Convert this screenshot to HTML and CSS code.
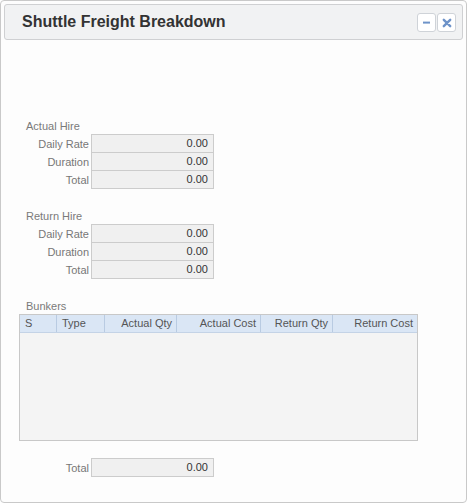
FILE: index.html
```html
<!DOCTYPE html>
<html>
<head>
<meta charset="utf-8">
<link rel="stylesheet" href="styles.css">
</head>
<body>
<div class="window">
  <div class="header">
    <div class="title">Shuttle Freight Breakdown</div>
    <div class="tools">
      <div class="tool"><svg width="9" height="9" viewBox="0 0 9 9"><rect x="1" y="3.6" width="7" height="2" fill="#6e93c9"/></svg></div>
      <div class="tool"><svg width="10" height="10" viewBox="0 0 10 10"><path d="M1.8 1.8 L8.2 8.2 M8.2 1.8 L1.8 8.2" stroke="#6e93c9" stroke-width="2.4" stroke-linecap="round"/></svg></div>
    </div>
  </div>
  <div class="content">
    <div class="section first">
      <div class="sec-title">Actual Hire</div>
      <div class="row"><div class="lbl">Daily Rate</div><div class="box">0.00</div></div>
      <div class="row"><div class="lbl">Duration</div><div class="box">0.00</div></div>
      <div class="row"><div class="lbl">Total</div><div class="box">0.00</div></div>
    </div>
    <div class="section">
      <div class="sec-title">Return Hire</div>
      <div class="row"><div class="lbl">Daily Rate</div><div class="box">0.00</div></div>
      <div class="row"><div class="lbl">Duration</div><div class="box">0.00</div></div>
      <div class="row"><div class="lbl">Total</div><div class="box">0.00</div></div>
    </div>
    <div class="section">
      <div class="sec-title">Bunkers</div>
      <div class="grid">
        <div class="grid-head">
          <div class="col c1">S</div>
          <div class="col c2">Type</div>
          <div class="col c3 r">Actual Qty</div>
          <div class="col c4 r">Actual Cost</div>
          <div class="col c5 r">Return Qty</div>
          <div class="col c6 r">Return Cost</div>
        </div>
        <div class="grid-body"></div>
      </div>
    </div>
    <div class="total-row row"><div class="lbl">Total</div><div class="box">0.00</div></div>
  </div>
</div>
</body>
</html>
```
FILE: styles.css
```css
html, body {
  margin: 0;
  padding: 0;
  background: #ffffff;
}
body {
  font-family: "Liberation Sans", Arial, sans-serif;
  font-size: 11px;
}
.window {
  box-sizing: border-box;
  width: 467px;
  height: 503px;
  border: 1px solid #c9c9c9;
  border-radius: 4px;
  padding: 3px;
  background: #fdfdfd;
}
.header {
  box-sizing: border-box;
  height: 36px;
  border: 1px solid #cfd0d2;
  border-radius: 3px;
  background: #f1f2f3;
  display: flex;
  align-items: center;
  justify-content: space-between;
  padding: 0 6px 0 17px;
}
.title {
  font-size: 16px;
  font-weight: bold;
  color: #333333;
  margin-top: -1px;
}
.tools {
  display: flex;
  gap: 1px;
  margin-top: 1px;
}
.tool {
  box-sizing: border-box;
  width: 19px;
  height: 19px;
  background: #ffffff;
  border: 1px solid #cfd3d8;
  border-radius: 3px;
  display: flex;
  align-items: center;
  justify-content: center;
}
.content {
  padding-left: 15px;
}
.section {
  margin-top: 21px;
}
.section.first {
  margin-top: 79px;
}
.sec-title {
  height: 15px;
  line-height: 14px;
  padding-left: 7px;
  color: #7a7a7a;
}
.row {
  display: flex;
  align-items: center;
  margin-bottom: -1px;
}
.lbl {
  width: 70px;
  text-align: right;
  color: #777777;
  padding-right: 2px;
}
.box {
  box-sizing: border-box;
  width: 123px;
  height: 19px;
  line-height: 17px;
  border: 1px solid #cccccc;
  background: #f0f0f0;
  color: #333333;
  text-align: right;
  padding-right: 5px;
}
.grid {
  box-sizing: border-box;
  width: 399px;
  height: 127px;
  border: 1px solid #c8c8c8;
  background: #f4f4f4;
  display: flex;
  flex-direction: column;
}
.grid-head {
  display: flex;
  height: 17px;
  background: #dae6f5;
  border-bottom: 1px solid #c4d3e6;
}
.col {
  box-sizing: border-box;
  line-height: 17px;
  padding: 0 4px 0 5px;
  color: #555555;
  border-right: 1px solid #b9cbe2;
}
.col.r {
  text-align: right;
}
.c1 { width: 37px; }
.c2 { width: 48px; }
.c3 { width: 72px; }
.c4 { width: 84px; }
.c5 { width: 72px; }
.c6 { width: 84px; border-right: none; }
.grid-body {
  flex: 1;
}
.total-row {
  margin-top: 17px;
}
```
